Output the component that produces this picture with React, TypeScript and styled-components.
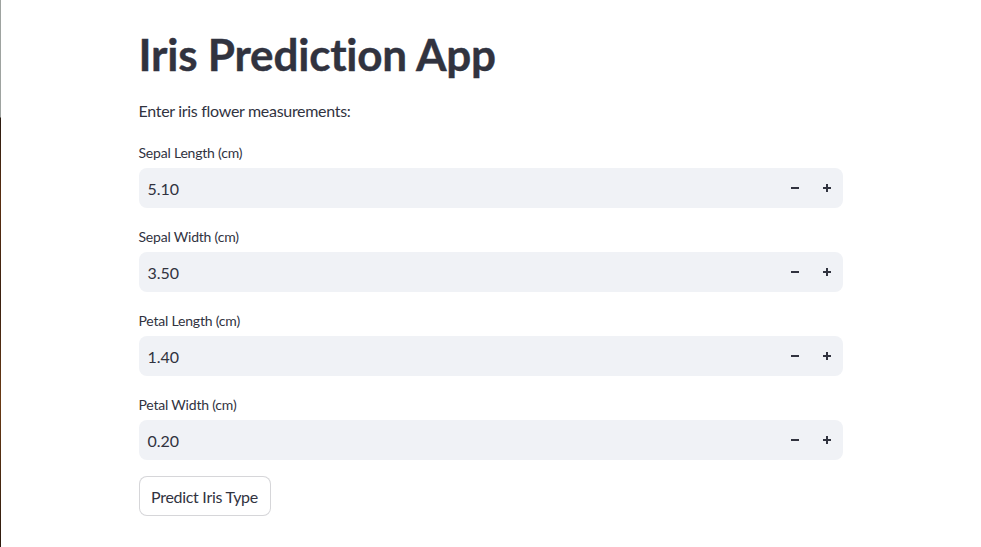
import React from "react";
import styled, { createGlobalStyle } from "styled-components";

const Global = createGlobalStyle`
  html, body { margin: 0; padding: 0; background: #ffffff; }
  body { font-family: "Lato", "Noto Sans", sans-serif; color: #31333f; }
  * { box-sizing: border-box; }
`;

const Page = styled.div`
  display: flex;
  min-height: 547px;
  width: 981px;
  overflow: hidden;
`;

const Edge = styled.div`
  flex: 0 0 1px;
  background: linear-gradient(
    to bottom,
    #9ea3a0 0px,
    #9ea3a0 117px,
    #2a1a10 118px,
    #5a2e10 200px,
    #3a2010 300px,
    #6a3a14 400px,
    #2c1a0e 547px
  );
`;

const Main = styled.main`
  flex: 1;
  display: flex;
  justify-content: center;
  padding-right: 1px;
`;

const Block = styled.div`
  width: 704px;
  padding-top: 28px;
  display: flex;
  flex-direction: column;
`;

const Title = styled.h1`
  margin: 0;
  font-size: 44px;
  line-height: 52px;
  font-weight: 700;
  color: #31333f;
  letter-spacing: -0.2px;
  -webkit-text-stroke: 0.4px #31333f;
`;

const Intro = styled.p`
  margin: 19px 0 0;
  font-size: 16px;
  line-height: 24px;
  letter-spacing: -0.3px;
`;

const Field = styled.div<{ $first?: boolean }>`
  display: flex;
  flex-direction: column;
  margin-top: ${(p) => (p.$first ? "20px" : "19px")};
`;

const Label = styled.label`
  font-size: 14px;
  line-height: 20px;
  color: #31333f;
  letter-spacing: -0.2px;
`;

const InputRow = styled.div`
  margin-top: 5px;
  height: 40px;
  display: flex;
  align-items: center;
  background: #f0f2f6;
  border-radius: 8px;
`;

const Value = styled.span`
  flex: 1;
  padding-left: 9px;
  font-size: 16px;
`;

const Step = styled.button`
  width: 32px;
  height: 40px;
  border: none;
  background: transparent;
  padding: 0;
  display: flex;
  align-items: center;
  justify-content: center;
  color: #31333f;
  cursor: pointer;
`;

const Button = styled.button`
  align-self: flex-start;
  margin-top: 16px;
  height: 40px;
  width: 132px;
  padding: 0;
  background: #ffffff;
  border: 1px solid rgba(49, 51, 63, 0.2);
  border-radius: 8px;
  font-family: inherit;
  font-size: 16px;
  letter-spacing: -0.3px;
  color: #31333f;
`;

const Minus = () => (
  <svg width="10" height="10" viewBox="0 0 10 10">
    <rect x="1" y="4" width="8" height="2" fill="currentColor" />
  </svg>
);

const Plus = () => (
  <svg width="10" height="10" viewBox="0 0 10 10">
    <rect x="1" y="4" width="8" height="2" fill="currentColor" />
    <rect x="4" y="1" width="2" height="8" fill="currentColor" />
  </svg>
);

const fields = [
  { label: "Sepal Length (cm)", value: "5.10" },
  { label: "Sepal Width (cm)", value: "3.50" },
  { label: "Petal Length (cm)", value: "1.40" },
  { label: "Petal Width (cm)", value: "0.20" },
];

export default function App() {
  return (
    <Page>
      <Global />
      <Edge />
      <Main>
        <Block>
          <Title>Iris Prediction App</Title>
          <Intro>Enter iris flower measurements:</Intro>
          {fields.map((f, i) => (
            <Field key={f.label} $first={i === 0}>
              <Label>{f.label}</Label>
              <InputRow>
                <Value>{f.value}</Value>
                <Step aria-label="decrement"><Minus /></Step>
                <Step aria-label="increment"><Plus /></Step>
              </InputRow>
            </Field>
          ))}
          <Button>Predict Iris Type</Button>
        </Block>
      </Main>
    </Page>
  );
}
